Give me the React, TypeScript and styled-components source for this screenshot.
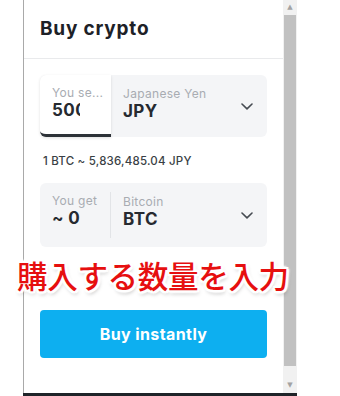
import React from 'react';
import styled, { createGlobalStyle } from 'styled-components';

const GlobalStyle = createGlobalStyle`
  html, body {
    margin: 0;
    padding: 0;
    background: #ffffff;
  }
  body {
    font-family: Inter, 'Noto Sans', sans-serif;
  }
`;

type Pair = {
  label: string;
  value: string;
  currencyName: string;
  code: string;
  active?: boolean;
  tall?: boolean;
};

const Chevron: React.FC = () => (
  <svg width='12' height='7' viewBox='0 0 12 7' fill='none'>
    <path d='M1 1L6 5.8L11 1' stroke='#464b52' strokeWidth='1.6' strokeLinecap='round' strokeLinejoin='round' />
  </svg>
);

const CurrencyCard: React.FC<Pair> = ({ label, value, currencyName, code, active, tall }) => (
  <Card $tall={tall}>
    <AmountBox $active={active}>
      <SmallLabel>{label}</SmallLabel>
      <AmountValue $clip={active}>{value}</AmountValue>
    </AmountBox>
    <CurrencyBox>
      <SmallLabel>{currencyName}</SmallLabel>
      <BigValue>{code}</BigValue>
    </CurrencyBox>
    <ChevronWrap>
      <Chevron />
    </ChevronWrap>
  </Card>
);

const App: React.FC = () => {
  return (
    <>
      <GlobalStyle />
      <Page>
        <Frame>
          <Viewport>
            <Widget>
              <Header>
                <Title>Buy crypto</Title>
              </Header>
              <Body>
                <CurrencyCard label='You se...' value='5000' currencyName='Japanese Yen' code='JPY' active />
                <Rate>1 BTC ~ 5,836,485.04 JPY</Rate>
                <CurrencyCard label='You get' value='~ 0' currencyName='Bitcoin' code='BTC' tall />
                <BuyButton type='button'>Buy instantly</BuyButton>
              </Body>
            </Widget>
            <Scrollbar>
              <Arrow>▲</Arrow>
              <Thumb />
              <Arrow>▼</Arrow>
            </Scrollbar>
          </Viewport>
          <BottomBar />
        </Frame>
        <Annotation>購入する数量を入力</Annotation>
      </Page>
    </>
  );
};

const Page = styled.div`
  position: relative;
  width: 340px;
  height: 396px;
  overflow: hidden;
  background: #ffffff;
`;

const Frame = styled.div`
  margin-left: 23px;
  width: 274px;
  height: 396px;
  display: flex;
  flex-direction: column;
`;

const Viewport = styled.div`
  flex: 1;
  display: flex;
  border-left: 1px solid #a9a9a9;
  min-height: 0;
`;

const Widget = styled.div`
  flex: 1;
  background: #ffffff;
  display: flex;
  flex-direction: column;
`;

const Header = styled.div`
  height: 59px;
  box-sizing: border-box;
  border-bottom: 1px solid #e9eaec;
  padding-left: 16px;
  display: flex;
  align-items: center;
`;

const Title = styled.h1`
  margin: 0 0 1px;
  font-size: 19px;
  font-weight: 700;
  color: #1d2127;
  letter-spacing: 0.8px;
`;

const Body = styled.div`
  padding: 16px 16px 0;
  display: flex;
  flex-direction: column;
`;

const Card = styled.div<{ $tall?: boolean }>`
  height: ${(p) => (p.$tall ? '64px' : '62px')};
  background: #f4f5f7;
  border-radius: 6px;
  display: flex;
  align-items: stretch;
`;

const AmountBox = styled.div<{ $active?: boolean }>`
  width: 71px;
  box-sizing: border-box;
  padding: 10px 0 0 12px;
  display: flex;
  flex-direction: column;
  overflow: hidden;
  background: ${(p) => (p.$active ? '#ffffff' : 'transparent')};
  border-radius: 6px 0 0 6px;
  box-shadow: ${(p) => (p.$active ? '0 1px 3px rgba(0,0,0,0.12)' : 'none')};
  border-bottom: ${(p) => (p.$active ? '3px solid #2d3238' : 'none')};
  position: relative;
  &::after {
    content: '';
    display: ${(p) => (p.$active ? 'none' : 'block')};
    position: absolute;
    right: 0;
    top: 9px;
    bottom: 9px;
    width: 1px;
    background: #e2e4e7;
  }
`;

const CurrencyBox = styled.div`
  flex: 1;
  padding: 11px 0 0 12px;
  display: flex;
  flex-direction: column;
`;

const SmallLabel = styled.span`
  font-size: 12px;
  color: #a8acb2;
  white-space: nowrap;
  line-height: 15px;
  letter-spacing: 0.3px;
`;

const BigValue = styled.span`
  font-size: 17px;
  font-weight: 700;
  color: #262a30;
  white-space: nowrap;
  line-height: 21px;
  letter-spacing: 0.4px;
`;

const AmountValue = styled(BigValue)<{ $clip?: boolean }>`
  max-width: ${(p) => (p.$clip ? '28px' : 'none')};
  overflow: hidden;
`;

const ChevronWrap = styled.div`
  width: 26px;
  display: flex;
  align-items: center;
  justify-content: flex-start;
  padding-top: 1px;
`;

const Rate = styled.div`
  margin: 15px 0 13px 3px;
  height: 18px;
  font-size: 11.5px;
  font-weight: 500;
  color: #3a3f45;
  line-height: 18px;
  letter-spacing: 0.2px;
`;

const BuyButton = styled.button`
  margin-top: 63px;
  height: 48px;
  border: none;
  border-radius: 4px;
  background: #0daff0;
  color: #ffffff;
  font-family: Inter, 'Noto Sans', sans-serif;
  font-size: 16px;
  font-weight: 700;
  letter-spacing: 0.4px;
  cursor: pointer;
`;

const Scrollbar = styled.div`
  width: 14px;
  background: #f1f1f1;
  display: flex;
  flex-direction: column;
  align-items: center;
`;

const Arrow = styled.div`
  height: 15px;
  font-size: 7px;
  line-height: 15px;
  color: #a3a3a3;
  font-family: 'DejaVu Sans', sans-serif;
`;

const Thumb = styled.div`
  flex: 1;
  width: 12px;
  background: #c1c1c1;
  margin: 0 0 12px;
`;

const BottomBar = styled.div`
  height: 3px;
  background: #1f2429;
`;

const Annotation = styled.div`
  position: absolute;
  left: 17px;
  top: 253px;
  font-family: 'Noto Sans CJK JP', sans-serif;
  font-size: 30.5px;
  font-weight: 500;
  color: #e60f0f;
  white-space: nowrap;
  letter-spacing: -0.3px;
  text-shadow:
    2px 0 0 #fff, -2px 0 0 #fff, 0 2px 0 #fff, 0 -2px 0 #fff,
    2px 2px 0 #fff, -2px -2px 0 #fff, 2px -2px 0 #fff, -2px 2px 0 #fff,
    3px 0 2px #fff, -3px 0 2px #fff, 0 3px 2px #fff, 0 -3px 2px #fff,
    1px 3px 4px rgba(0, 0, 0, 0.35);
`;

export default App;
